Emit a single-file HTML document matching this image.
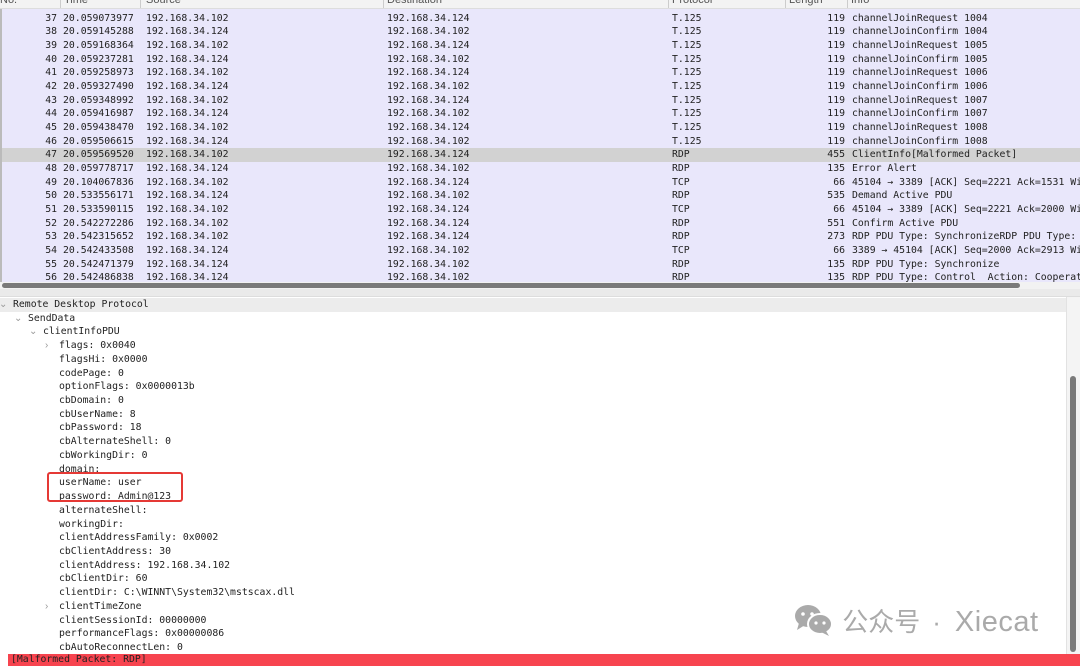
<!DOCTYPE html>
<html><head><meta charset="utf-8"><style>
*{margin:0;padding:0;box-sizing:border-box}
body{width:1080px;height:666px;overflow:hidden;background:#fff;font-family:"DejaVu Sans Mono","Liberation Mono",monospace;font-size:9.8px;color:#222;position:relative}
.hdr{position:absolute;left:0;top:0;width:1080px;height:9px;background:#f3f3f3;border-bottom:1px solid #ddd;font-family:"Liberation Sans",sans-serif;font-size:11px;color:#555;overflow:hidden}
.hdr span{position:absolute;top:-6px}
.hdr i{position:absolute;top:0;width:1px;height:9px;background:#ccc}
.list{position:absolute;left:0;top:9px;width:1080px;height:274px;background:#e9e7fb;overflow:hidden;border-left:2px solid #bbb}
.r{position:absolute;left:0;height:13.67px;width:1080px;line-height:13.67px;white-space:pre}
.r.sel{background:#d2d2d2}
.r span{position:absolute}
.sb{position:absolute;left:0;top:282px;width:1080px;height:7px;background:#f2f2f2}
.sb div{position:absolute;left:2px;top:1px;width:1018px;height:5px;border-radius:3px;background:#7a7a7a}
.div{position:absolute;left:0;top:289px;width:1080px;height:8px;background:#eaeaea;border-bottom:1px solid #ddd}
.det{position:absolute;left:0;top:297px;width:1066px;height:357px}
.d{position:absolute;white-space:pre;line-height:13.7px}
.vs{position:absolute;left:1066px;top:297px;width:14px;height:357px;background:#f4f4f4;border-left:1px solid #e2e2e2}
.vs div{position:absolute;left:3px;top:79px;width:6px;height:276px;border-radius:3px;background:#7a7a7a}
.bad{position:absolute;left:8px;top:654px;width:1072px;height:12px;background:#f7444f;line-height:12px;padding-left:3px;color:#222}
.box{position:absolute;left:47px;top:472px;width:136px;height:30px;border:2px solid #e53935;border-radius:3px}
.wm{position:absolute;left:793px;top:602px;font-family:"Liberation Sans","Noto Sans CJK SC",sans-serif;font-size:26px;color:#aaa;white-space:pre}
</style></head><body>
<div class="hdr"><span style="left:0">No.</span><span style="left:64px">Time</span><span style="left:146px">Source</span><span style="left:387px">Destination</span><span style="left:672px">Protocol</span><span style="left:789px">Length</span><span style="left:851px">Info</span>
<i style="left:60px"></i><i style="left:140px"></i><i style="left:383px"></i><i style="left:668px"></i><i style="left:785px"></i><i style="left:847px"></i></div>
<div class="list" id="L"></div>
<div class="sb"><div></div></div>
<div class="div"></div>
<div class="det" id="D"></div>
<div class="vs"><div></div></div>
<div class="box"></div>
<div class="bad">[Malformed Packet: RDP]</div>
<div class="wm"><svg width="42" height="34" viewBox="0 0 42 34" style="vertical-align:-6px"><ellipse cx="15" cy="13" rx="13" ry="11" fill="#aaa"/><path d="M6 20 L4 27 L12 22Z" fill="#aaa"/><ellipse cx="27" cy="21" rx="12" ry="10" fill="#aaa" stroke="#fff" stroke-width="2"/><path d="M33 28 L36 33 L28 29Z" fill="#aaa"/><circle cx="10" cy="11" r="1.8" fill="#fff"/><circle cx="19" cy="11" r="1.8" fill="#fff"/><circle cx="23" cy="20" r="1.6" fill="#fff"/><circle cx="31" cy="20" r="1.6" fill="#fff"/></svg> 公众号<span style="margin:0 14px 0 12px">·</span><span style="font-size:29px;letter-spacing:0.5px">Xiecat</span></div>
<script>
var rows=[
["37","20.059073977","192.168.34.102","192.168.34.124","T.125","119","channelJoinRequest 1004"],
["38","20.059145288","192.168.34.124","192.168.34.102","T.125","119","channelJoinConfirm 1004"],
["39","20.059168364","192.168.34.102","192.168.34.124","T.125","119","channelJoinRequest 1005"],
["40","20.059237281","192.168.34.124","192.168.34.102","T.125","119","channelJoinConfirm 1005"],
["41","20.059258973","192.168.34.102","192.168.34.124","T.125","119","channelJoinRequest 1006"],
["42","20.059327490","192.168.34.124","192.168.34.102","T.125","119","channelJoinConfirm 1006"],
["43","20.059348992","192.168.34.102","192.168.34.124","T.125","119","channelJoinRequest 1007"],
["44","20.059416987","192.168.34.124","192.168.34.102","T.125","119","channelJoinConfirm 1007"],
["45","20.059438470","192.168.34.102","192.168.34.124","T.125","119","channelJoinRequest 1008"],
["46","20.059506615","192.168.34.124","192.168.34.102","T.125","119","channelJoinConfirm 1008"],
["47","20.059569520","192.168.34.102","192.168.34.124","RDP","455","ClientInfo[Malformed Packet]"],
["48","20.059778717","192.168.34.124","192.168.34.102","RDP","135","Error Alert"],
["49","20.104067836","192.168.34.102","192.168.34.124","TCP","66","45104 → 3389 [ACK] Seq=2221 Ack=1531 Wi"],
["50","20.533556171","192.168.34.124","192.168.34.102","RDP","535","Demand Active PDU"],
["51","20.533590115","192.168.34.102","192.168.34.124","TCP","66","45104 → 3389 [ACK] Seq=2221 Ack=2000 Wi"],
["52","20.542272286","192.168.34.102","192.168.34.124","RDP","551","Confirm Active PDU"],
["53","20.542315652","192.168.34.102","192.168.34.124","RDP","273","RDP PDU Type: SynchronizeRDP PDU Type: "],
["54","20.542433508","192.168.34.124","192.168.34.102","TCP","66","3389 → 45104 [ACK] Seq=2000 Ack=2913 Wi"],
["55","20.542471379","192.168.34.124","192.168.34.102","RDP","135","RDP PDU Type: Synchronize"],
["56","20.542486838","192.168.34.124","192.168.34.102","RDP","135","RDP PDU Type: Control  Action: Cooperat"]];
var h="";rows.forEach(function(r,i){var t=2.7+i*13.67;h+='<div class="r'+(i==10?' sel':'')+'" style="top:'+t+'px"><span style="right:1025px">'+r[0]+'</span><span style="left:61px">'+r[1]+'</span><span style="left:144px">'+r[2]+'</span><span style="left:385px">'+r[3]+'</span><span style="left:670px">'+r[4]+'</span><span style="right:237px">'+r[5]+'</span><span style="left:850px">'+r[6]+'</span></div>';});
document.getElementById("L").innerHTML=h;
var d=[[13,"Remote Desktop Protocol","v"],[28,"SendData","v"],[43,"clientInfoPDU","v"],[59,"flags: 0x0040",">"],[59,"flagsHi: 0x0000"],[59,"codePage: 0"],[59,"optionFlags: 0x0000013b"],[59,"cbDomain: 0"],[59,"cbUserName: 8"],[59,"cbPassword: 18"],[59,"cbAlternateShell: 0"],[59,"cbWorkingDir: 0"],[59,"domain:"],[59,"userName: user"],[59,"password: Admin@123"],[59,"alternateShell:"],[59,"workingDir:"],[59,"clientAddressFamily: 0x0002"],[59,"cbClientAddress: 30"],[59,"clientAddress: 192.168.34.102"],[59,"cbClientDir: 60"],[59,"clientDir: C:\\WINNT\\System32\\mstscax.dll"],[59,"clientTimeZone",">"],[59,"clientSessionId: 00000000"],[59,"performanceFlags: 0x00000086"],[59,"cbAutoReconnectLen: 0"]];
var g='<div style="position:absolute;left:0;top:1px;width:1066px;height:14px;background:#ececec"></div>';
d.forEach(function(x,i){var t=1+i*13.72;if(x[2])g+='<div class="d" style="left:'+(x[0]-14)+'px;top:'+t+'px;color:#999;font-family:Liberation Sans,sans-serif">'+(x[2]=="v"?"⌄":"›")+'</div>';g+='<div class="d" style="left:'+x[0]+'px;top:'+t+'px">'+x[1]+'</div>';});
document.getElementById("D").innerHTML=g;
</script>
</body></html>
